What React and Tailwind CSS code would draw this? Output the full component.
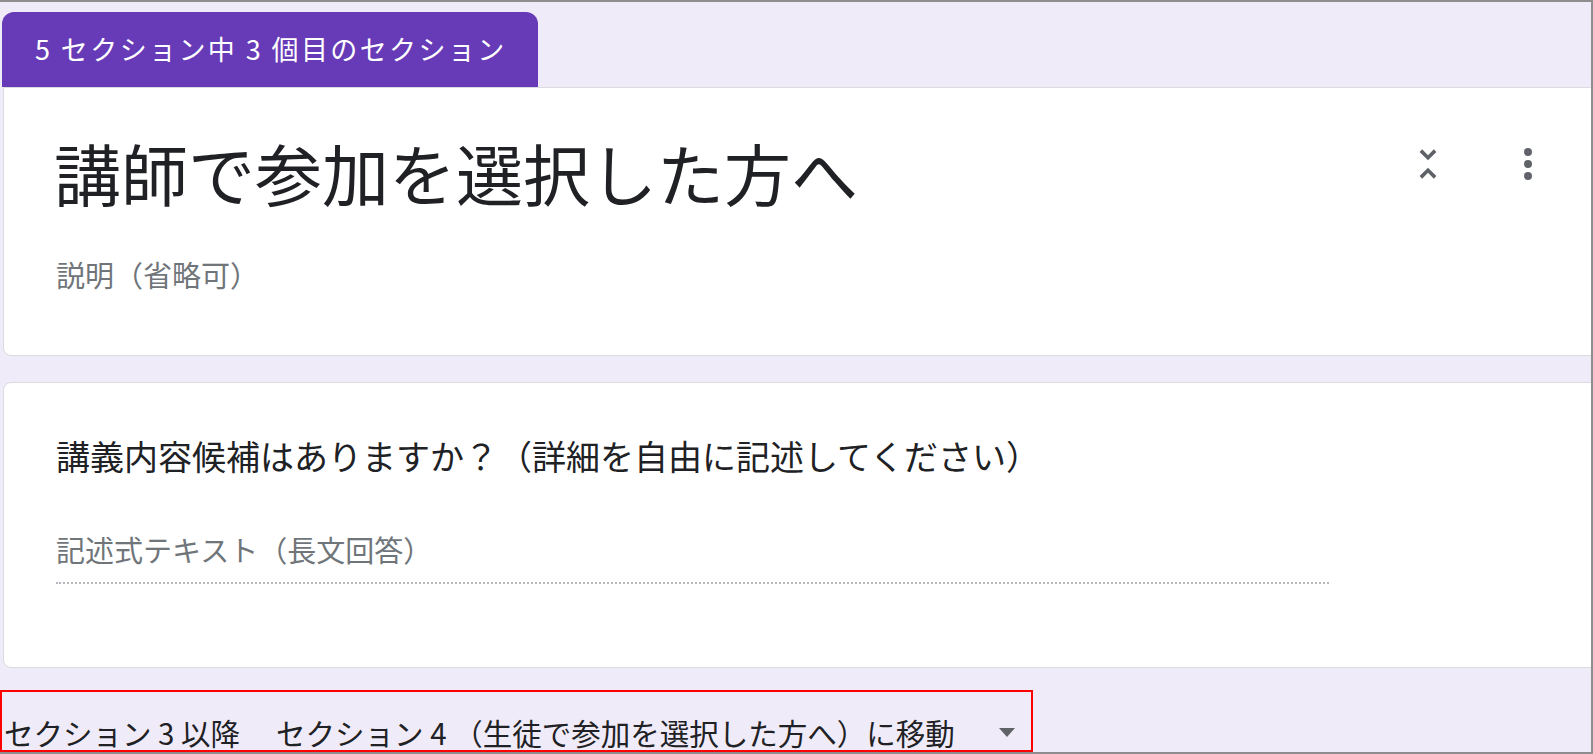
import React from 'react';

function UnfoldLess() {
  return (
    <svg width="44" height="44" viewBox="0 0 24 24" fill="#5f6368">
      <path d="M7.41 18.59L8.83 20 12 16.83 15.17 20l1.41-1.41L12 14l-4.59 4.59zm9.18-13.18L15.17 4 12 7.17 8.83 4 7.41 5.41 12 10l4.59-4.59z" />
    </svg>
  );
}

function MoreVert() {
  return (
    <svg width="48" height="48" viewBox="0 0 24 24" fill="#5f6368">
      <circle cx="12" cy="6" r="2" />
      <circle cx="12" cy="12" r="2" />
      <circle cx="12" cy="18" r="2" />
    </svg>
  );
}

export default function App() {
  return (
    <div className="w-[1593px] h-[754px] overflow-hidden bg-[#f0ebf8] border-t-2 border-r-2 border-b-2 border-[#8e8e8e] font-['Noto_Sans_CJK_JP','Noto_Sans',sans-serif]">

      {/* Section tab */}
      <div className="mt-[10px] ml-[2px] w-[536px] h-[75px] rounded-t-[12px] bg-[#673ab7] text-white text-[27px] tracking-[2.4px] pl-[33px] flex items-center">
        5 セクション中 3 個目のセクション
      </div>

      {/* Section header card */}
      <div className="ml-[3px] w-[1600px] bg-white border border-[#dadce0] rounded-b-lg rounded-tr-lg pl-[50px] pr-[50px] pt-[44px] pb-[63px]">
        <div className="flex items-start">
          <h1 className="text-[67px] leading-[80px] text-[#202124]">講師で参加を選択した方へ</h1>
          <div className="ml-auto mt-[8px] flex items-center gap-[54px]">
            <UnfoldLess />
            <MoreVert />
          </div>
        </div>
        <p className="mt-[44px] pl-[2px] text-[29px] leading-[36px] text-[#70757a]">説明（省略可）</p>
      </div>

      {/* Question card */}
      <div className="mt-[26px] ml-[3px] w-[1600px] bg-white border border-[#dadce0] rounded-lg pl-[52px] pt-[51px] pb-[83px]">
        <p className="text-[34px] leading-[44px] text-[#202124]">講義内容候補はありますか？（詳細を自由に記述してください）</p>
        <div className="mt-[51px] w-[1273px] pb-[13px] border-b-2 border-dotted border-[#b4b7bb]">
          <p className="text-[29px] leading-[40px] text-[#70757a]">記述式テキスト（長文回答）</p>
        </div>
      </div>

      {/* Go to section row */}
      <div className="mt-[22px] w-[1033px] h-[62px] border-2 border-[#ff0000] flex items-center pt-[22px] pl-[2px] text-[29.5px] text-[#202124]">
        <span>セクション 3 以降</span>
        <span className="ml-[36px]">セクション 4 （生徒で参加を選択した方へ）に移動</span>
        <svg className="ml-auto mr-[16px]" width="16" height="9" viewBox="0 0 16 9" fill="#5f6368">
          <path d="M0 0 L16 0 L8 9 Z" />
        </svg>
      </div>
    </div>
  );
}
